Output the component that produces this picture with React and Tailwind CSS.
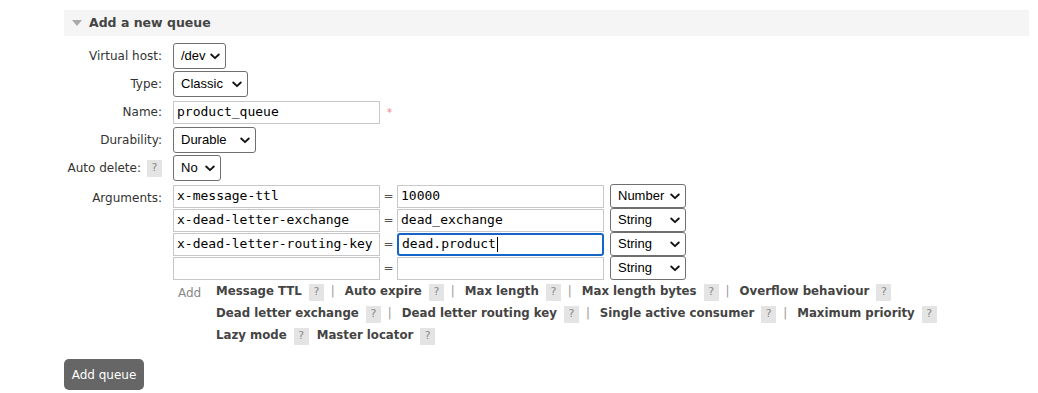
import React from 'react'

const verdana = { fontFamily: '"DejaVu Sans", Verdana, sans-serif' }

function Chevron() {
  return (
    <svg width="10" height="7" viewBox="0 0 10 7" className="shrink-0">
      <path d="M1.2 1.5 L5 5.2 L8.8 1.5" fill="none" stroke="#111" strokeWidth="1.8" strokeLinecap="round" strokeLinejoin="round" />
    </svg>
  )
}

function FakeSelect({ value, width, height = 'h-[26px]' }) {
  return (
    <div
      className={`flex items-center justify-between ${height} ${width} rounded-[3px] border border-[#6f6f6f] bg-white pl-[7px] pr-[5px] text-[13px] text-black font-['Liberation_Sans',Arial,sans-serif]`}
    >
      <span>{value}</span>
      <Chevron />
    </div>
  )
}

function Help() {
  return (
    <span className="inline-flex h-[17px] w-[15px] items-center justify-center bg-[#e4e4e4] text-[11px] font-normal text-[#888] font-['DejaVu_Sans',Verdana,sans-serif]">
      ?
    </span>
  )
}

function TextBox({ value, focused }) {
  return (
    <div
      className={`flex h-[23px] w-[207px] items-center px-[3px] text-[13px] text-black font-['DejaVu_Sans_Mono',monospace] ${
        focused
          ? 'rounded-[3px] border-2 border-[#1565c8] px-[2px]'
          : 'border border-[#c8c8c8]'
      }`}
    >
      <span>{value}</span>
      {focused && <span className="ml-[1px] h-[15px] w-px bg-black" />}
    </div>
  )
}

function Row({ label, help, children }) {
  return (
    <div className="flex h-[28px] items-center">
      <div className="flex w-[101px] items-center justify-end gap-[6px] pr-[3px] text-[12px] text-[#333]">
        <span>{label}</span>
        {help && <Help />}
      </div>
      <div className="flex items-center pl-[8px]">{children}</div>
    </div>
  )
}

const argRows = [
  { key: 'x-message-ttl', value: '10000', type: 'Number' },
  { key: 'x-dead-letter-exchange', value: 'dead_exchange', type: 'String' },
  { key: 'x-dead-letter-routing-key', value: 'dead.product', type: 'String', focused: true },
  { key: '', value: '', type: 'String' },
]

const linkLines = [
  [['Message TTL', true], ['Auto expire', true], ['Max length', true], ['Max length bytes', true], ['Overflow behaviour', false]],
  [['Dead letter exchange', true], ['Dead letter routing key', true], ['Single active consumer', true], ['Maximum priority', false]],
  [['Lazy mode', false], ['Master locator', false]],
]

export default function App() {
  return (
    <div className="min-h-[393px] w-[1038px] bg-white pt-[10px]" style={verdana}>
      <div className="ml-[64px] mr-[9px] flex h-[26px] items-center bg-[#f5f5f5]">
        <svg width="10" height="6" viewBox="0 0 10 6" className="ml-[8px]">
          <path d="M0 0 L10 0 L5 6 Z" fill="#aaa" />
        </svg>
        <span className="ml-[7px] text-[12.5px] font-bold text-[#444]">Add a new queue</span>
      </div>

      <div className="ml-[64px] mt-[6px]">
        <Row label="Virtual host:">
          <FakeSelect value="/dev" width="w-[53px]" />
        </Row>
        <Row label="Type:">
          <FakeSelect value="Classic" width="w-[75px]" />
        </Row>
        <Row label="Name:">
          <TextBox value="product_queue" />
          <span className="ml-[7px] text-[10px] text-[#f08080]">*</span>
        </Row>
        <Row label="Durability:">
          <FakeSelect value="Durable" width="w-[83px]" />
        </Row>
        <Row label="Auto delete:" help>
          <FakeSelect value="No" width="w-[48px]" />
        </Row>

        <div className="mt-[2px] flex">
          <div className="w-[101px] pr-[3px] pt-[5px] text-right text-[12px] text-[#333]">Arguments:</div>
          <div className="flex flex-col pl-[8px]">
            {argRows.map((r, i) => (
              <div key={i} className="flex h-[24px] items-center">
                <TextBox value={r.key} />
                <span className="w-[17px] text-center text-[12px] text-[#555]">=</span>
                <TextBox value={r.value} focused={r.focused} />
                <div className="ml-[6px]">
                  <FakeSelect value={r.type} width="w-[76px]" height="h-[24px]" />
                </div>
              </div>
            ))}
          </div>
        </div>

        <div className="ml-[109px] mt-[1px] flex">
          <span className="w-[43px] pl-[5px] pt-[3px] text-[12px] text-[#888]">Add</span>
          <div className="flex flex-col">
            {linkLines.map((line, i) => (
              <div key={i} className="flex h-[22px] items-center text-[11.75px] font-bold text-[#444]">
                {line.map(([name, sep], j) => (
                  <span key={j} className="flex items-center">
                    <span>{name}</span>
                    <span className="ml-[7px]">
                      <Help />
                    </span>
                    {sep ? (
                      <span className="ml-[7px] mr-[10px] font-normal text-[#999]">|</span>
                    ) : (
                      <span className="w-[8px]" />
                    )}
                  </span>
                ))}
              </div>
            ))}
          </div>
        </div>

        <button className="mt-[12px] h-[31px] w-[80px] rounded-[5px] bg-[#666] text-[12px] text-white">
          Add queue
        </button>
      </div>
    </div>
  )
}
